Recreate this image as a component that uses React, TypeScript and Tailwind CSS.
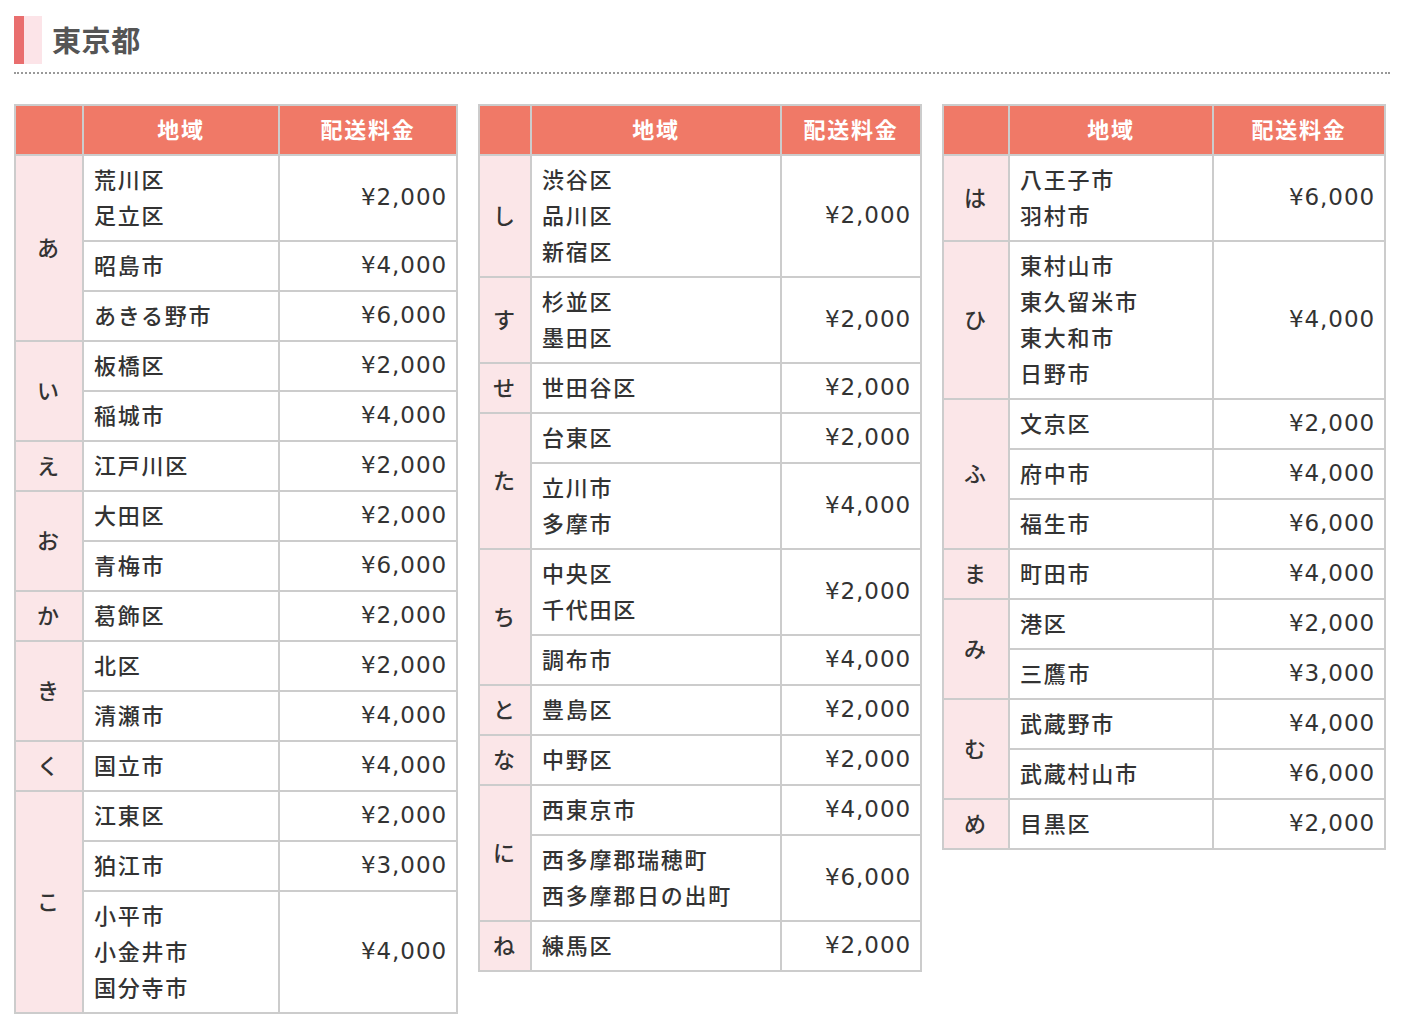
import React from "react";

type Area = { names: string[]; price: string };
type Group = { kana: string; areas: Area[] };
type TableDef = { cols: [number, number, number]; groups: Group[] };

const a = (names: string[], price: string): Area => ({ names, price });

const tables: TableDef[] = [
  {
    cols: [68, 196, 178],
    groups: [
      { kana: "あ", areas: [a(["荒川区", "足立区"], "¥2,000"), a(["昭島市"], "¥4,000"), a(["あきる野市"], "¥6,000")] },
      { kana: "い", areas: [a(["板橋区"], "¥2,000"), a(["稲城市"], "¥4,000")] },
      { kana: "え", areas: [a(["江戸川区"], "¥2,000")] },
      { kana: "お", areas: [a(["大田区"], "¥2,000"), a(["青梅市"], "¥6,000")] },
      { kana: "か", areas: [a(["葛飾区"], "¥2,000")] },
      { kana: "き", areas: [a(["北区"], "¥2,000"), a(["清瀬市"], "¥4,000")] },
      { kana: "く", areas: [a(["国立市"], "¥4,000")] },
      {
        kana: "こ",
        areas: [a(["江東区"], "¥2,000"), a(["狛江市"], "¥3,000"), a(["小平市", "小金井市", "国分寺市"], "¥4,000")],
      },
    ],
  },
  {
    cols: [52, 250, 140],
    groups: [
      { kana: "し", areas: [a(["渋谷区", "品川区", "新宿区"], "¥2,000")] },
      { kana: "す", areas: [a(["杉並区", "墨田区"], "¥2,000")] },
      { kana: "せ", areas: [a(["世田谷区"], "¥2,000")] },
      { kana: "た", areas: [a(["台東区"], "¥2,000"), a(["立川市", "多摩市"], "¥4,000")] },
      { kana: "ち", areas: [a(["中央区", "千代田区"], "¥2,000"), a(["調布市"], "¥4,000")] },
      { kana: "と", areas: [a(["豊島区"], "¥2,000")] },
      { kana: "な", areas: [a(["中野区"], "¥2,000")] },
      { kana: "に", areas: [a(["西東京市"], "¥4,000"), a(["西多摩郡瑞穂町", "西多摩郡日の出町"], "¥6,000")] },
      { kana: "ね", areas: [a(["練馬区"], "¥2,000")] },
    ],
  },
  {
    cols: [66, 204, 172],
    groups: [
      { kana: "は", areas: [a(["八王子市", "羽村市"], "¥6,000")] },
      { kana: "ひ", areas: [a(["東村山市", "東久留米市", "東大和市", "日野市"], "¥4,000")] },
      { kana: "ふ", areas: [a(["文京区"], "¥2,000"), a(["府中市"], "¥4,000"), a(["福生市"], "¥6,000")] },
      { kana: "ま", areas: [a(["町田市"], "¥4,000")] },
      { kana: "み", areas: [a(["港区"], "¥2,000"), a(["三鷹市"], "¥3,000")] },
      { kana: "む", areas: [a(["武蔵野市"], "¥4,000"), a(["武蔵村山市"], "¥6,000")] },
      { kana: "め", areas: [a(["目黒区"], "¥2,000")] },
    ],
  },
];

// Noto CJK sits a little low, so CJK cells get less top padding
const cell = "border-2 border-[#cccccc] leading-[36px]";
const jp = `${cell} pt-[4px] pb-[8px]`;

const PriceTable = ({ def }: { def: TableDef }) => (
  <table className="w-[444px] table-fixed border-collapse">
    <colgroup>
      <col style={{ width: def.cols[0] }} />
      <col style={{ width: def.cols[1] }} />
      <col style={{ width: def.cols[2] }} />
    </colgroup>
    <thead>
      <tr className="bg-[#f07967] text-white font-bold">
        <th className={jp}></th>
        <th className={jp}>地域</th>
        <th className={jp}>配送料金</th>
      </tr>
    </thead>
    <tbody className="font-medium">
      {def.groups.map((g) =>
        g.areas.map((ar, i) => (
          <tr key={g.kana + i}>
            {i === 0 && (
              <td rowSpan={g.areas.length} className={`${jp} bg-[#fbe6e8] text-center align-middle`}>
                {g.kana}
              </td>
            )}
            <td className={`${jp} px-[10px] align-middle`}>
              {ar.names.map((n) => (
                <div key={n}>{n}</div>
              ))}
            </td>
            <td
              className={`${cell} pt-[5px] pb-[7px] pr-[9px] text-right align-middle text-[23px] font-normal font-['DejaVu_Sans',sans-serif] tracking-[0.04em]`}
            >
              {ar.price}
            </td>
          </tr>
        ))
      )}
    </tbody>
  </table>
);

export default function App() {
  return (
    <div className="min-h-screen bg-white px-[14px] pt-[16px] text-[22px] tracking-[0.08em] text-[#333] font-['Noto_Sans_CJK_JP',sans-serif]">
      <div className="flex items-center pb-[8px] border-b-2 border-dotted border-[#999] w-[1376px]">
        <div className="flex h-[48px]">
          <div className="w-[10px] bg-[#e96e6e]"></div>
          <div className="w-[18px] bg-[#fce4e8]"></div>
        </div>
        <h1 className="ml-[10px] text-[29px] font-bold text-[#555] tracking-[0.02em]">東京都</h1>
      </div>
      <div className="mt-[30px] flex items-start gap-[20px]">
        {tables.map((t, i) => (
          <PriceTable key={i} def={t} />
        ))}
      </div>
    </div>
  );
}
